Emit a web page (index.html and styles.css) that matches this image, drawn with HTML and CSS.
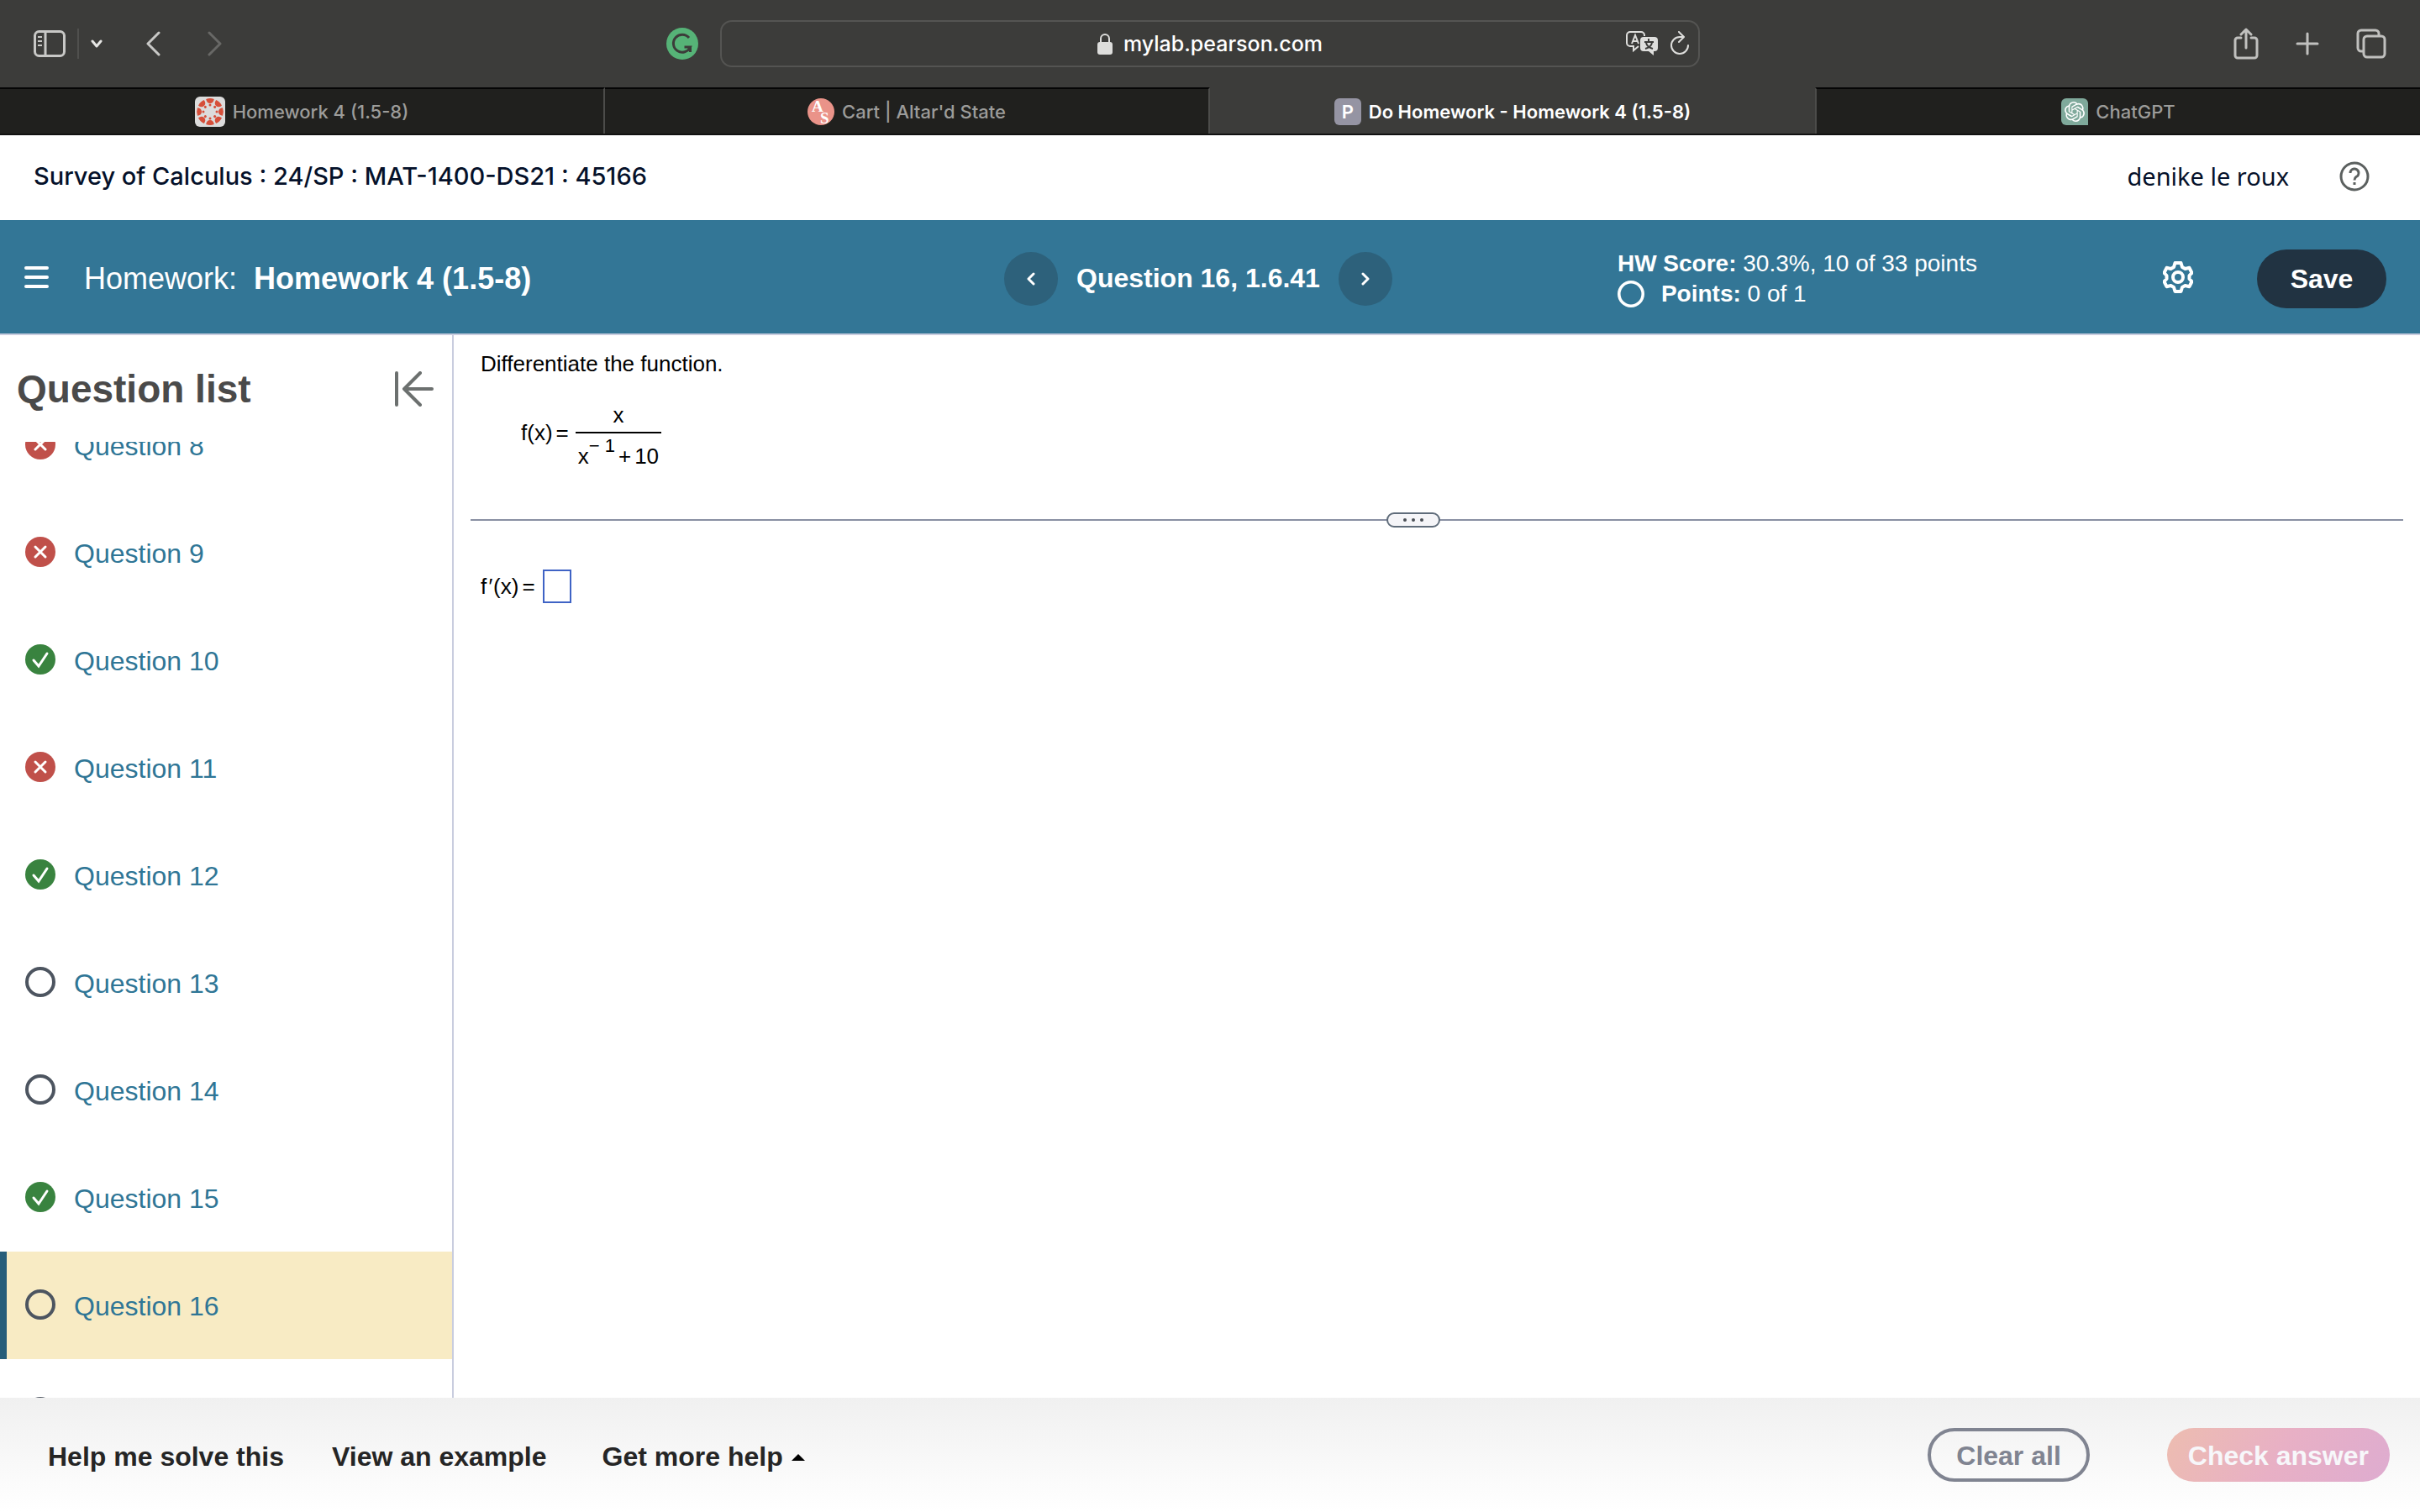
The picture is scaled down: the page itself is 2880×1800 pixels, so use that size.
FILE: index.html
```html
<!DOCTYPE html>
<html lang="en">
<head>
<meta charset="utf-8">
<title>Do Homework - Homework 4 (1.5-8)</title>
<link rel="stylesheet" href="styles.css">
</head>
<body>
<svg width="0" height="0" class="sprite" aria-hidden="true">
  <symbol id="wrong" viewBox="0 0 36 36"><circle cx="18" cy="18" r="18" fill="#c0504a"/><path d="M12 12l12 12M24 12L12 24" stroke="#fff" stroke-width="3" stroke-linecap="round"/></symbol>
  <symbol id="right" viewBox="0 0 36 36"><circle cx="18" cy="18" r="18" fill="#39833f"/><path d="M10 19l6 7L26 11" fill="none" stroke="#fff" stroke-width="3" stroke-linecap="round"/></symbol>
  <symbol id="open" viewBox="0 0 36 36"><circle cx="18" cy="18" r="16" fill="none" stroke="currentColor" stroke-width="4"/></symbol>
</svg>

<header class="toolbar">
  <div class="tools">
    <button class="icon" aria-label="Sidebar"><svg width="38" height="32" viewBox="0 0 38 32" fill="none" stroke="#c8c8c6" stroke-width="3"><rect x="1.500" y="1.500" width="35" height="29" rx="5"/><path d="M14 2v28"/><path d="M5 8h5M5 13h5M5 18h5" stroke-width="2"/></svg></button>
    <span class="divider"></span>
    <button class="icon" aria-label="Tab groups"><svg width="14" height="10" viewBox="0 0 14 10" fill="none" stroke="#e6e6e4" stroke-width="3" stroke-linecap="round" stroke-linejoin="round"><path d="M2 2l5 6 5-6"/></svg></button>
    <button class="icon back" aria-label="Back"><svg width="18" height="30" viewBox="0 0 18 30" fill="none" stroke="#c8c8c6" stroke-width="3" stroke-linecap="round" stroke-linejoin="round"><path d="M15 2L2 15l13 13"/></svg></button>
    <button class="icon" aria-label="Forward"><svg width="18" height="30" viewBox="0 0 18 30" fill="none" stroke="#686866" stroke-width="3" stroke-linecap="round" stroke-linejoin="round"><path d="M3 2l13 13L3 28"/></svg></button>
    <button class="icon grammarly" aria-label="Grammarly"><svg width="38" height="38" viewBox="0 0 38 38"><circle cx="19" cy="19" r="19" fill="#56b377"/><path d="M27 12a10.500 10.500 0 1 0 1.500 11h-7M28.500 22v7" fill="none" stroke="#3c3c3a" stroke-width="3"/></svg></button>
  </div>
  <div class="address">
    <span class="site"><svg width="18" height="26" viewBox="0 0 18 26"><rect y="11" width="18" height="15" rx="3" fill="#dededc"/><path d="M4 12V7a5 5 0 0 1 10 0v5" fill="none" stroke="#dededc" stroke-width="2"/></svg>mylab.pearson.com</span>
    <span class="actions">
      <button class="icon" aria-label="Translate"><svg width="40" height="30" viewBox="0 0 40 30"><path d="M15 18l-6 5v-5H5a4 4 0 0 1-4-4V5a4 4 0 0 1 4-4h13a4 4 0 0 1 4 4v1" fill="none" stroke="#dededc" stroke-width="2"/><path d="M7 15l4-10 4 10M8 12h6" fill="none" stroke="#dededc" stroke-width="2"/><path d="M21 7h13a4 4 0 0 1 4 4v9a4 4 0 0 1-4 4h-1v5l-6-5h-6a4 4 0 0 1-4-4v-9a4 4 0 0 1 4-4z" fill="#dededc"/><path d="M22 13h11M27 9v4M24 14c1 4 4 6 8 7M31 14c-1 4-4 6-8 7" fill="none" stroke="#3c3c3a" stroke-width="2"/></svg></button>
      <button class="icon" aria-label="Reload"><svg width="24" height="30" viewBox="0 0 24 30" fill="none" stroke="#dededc" stroke-width="2" stroke-linecap="round" stroke-linejoin="round"><path d="M22 17A10 10 0 1 1 12 7h4M11 1l6 6-6 6"/></svg></button>
    </span>
  </div>
  <div class="tools end">
    <button class="icon" aria-label="Share"><svg width="30" height="38" viewBox="0 0 30 38" fill="none" stroke="#c0c0be" stroke-width="3" stroke-linecap="round" stroke-linejoin="round"><path d="M9 12H5a3 3 0 0 0-3 3v18a3 3 0 0 0 3 3h20a3 3 0 0 0 3-3V15a3 3 0 0 0-3-3h-4M15 24V2M9 8l6-6 6 6"/></svg></button>
    <button class="icon" aria-label="New tab"><svg width="28" height="28" viewBox="0 0 28 28" stroke="#c0c0be" stroke-width="3" stroke-linecap="round"><path d="M14 2v24M2 14h24"/></svg></button>
    <button class="icon" aria-label="Tab overview"><svg width="36" height="36" viewBox="0 0 36 36" fill="none" stroke="#c0c0be" stroke-width="3"><path d="M9 27H6a4 4 0 0 1-4-4V6a4 4 0 0 1 4-4h17a4 4 0 0 1 4 4v3"/><rect x="9" y="9" width="25" height="25" rx="4"/></svg></button>
  </div>
</header>

<nav class="tabs">
  <a class="tab" href="#"><svg width="36" height="36" viewBox="0 0 36 36" fill="#d64f3a"><rect width="36" height="36" rx="6" fill="#dcdcdc"/><g id="ray"><path d="M13.200 3Q18 1.200 22.800 3Q22 8 18 8T13.200 3z"/><circle cx="18" cy="10" r="1.500"/></g><use href="#ray" transform="rotate(45 18 18)"/><use href="#ray" transform="rotate(90 18 18)"/><use href="#ray" transform="rotate(135 18 18)"/><use href="#ray" transform="rotate(180 18 18)"/><use href="#ray" transform="rotate(225 18 18)"/><use href="#ray" transform="rotate(270 18 18)"/><use href="#ray" transform="rotate(315 18 18)"/></svg>Homework 4 (1.5-8)</a>
  <a class="tab" href="#"><svg width="32" height="32" viewBox="0 0 32 32"><circle cx="16" cy="16" r="16" fill="#ea9389"/><text x="5" y="16" class="monogram">A</text><text x="15" y="30" class="monogram">S</text></svg>Cart | Altar'd State</a>
  <a class="tab current" href="#"><span class="favicon">P</span>Do Homework - Homework 4 (1.5-8)</a>
  <a class="tab" href="#"><svg width="32" height="32" viewBox="0 0 32 32"><path d="M6 0h20a6 6 0 0 1 6 6v26H6a6 6 0 0 1-6-6V6a6 6 0 0 1 6-6z" fill="#7fa99b"/><path transform="translate(4 4)" fill="#fff" d="M22.2819 9.8211a5.9847 5.9847 0 0 0-.5157-4.9108 6.0462 6.0462 0 0 0-6.5098-2.9A6.0651 6.0651 0 0 0 4.9807 4.1818a5.9847 5.9847 0 0 0-3.9977 2.9 6.0462 6.0462 0 0 0 .7427 7.0966 5.98 5.98 0 0 0 .511 4.9107 6.051 6.051 0 0 0 6.5146 2.9001A5.9847 5.9847 0 0 0 13.2599 24a6.0557 6.0557 0 0 0 5.7718-4.2058 5.9894 5.9894 0 0 0 3.9977-2.9001 6.0557 6.0557 0 0 0-.7475-7.0729zm-9.022 12.6081a4.4755 4.4755 0 0 1-2.8764-1.0408l.1419-.0804 4.7783-2.7582a.7948.7948 0 0 0 .3927-.6813v-6.7369l2.02 1.1686a.071.071 0 0 1 .038.052v5.5826a4.504 4.504 0 0 1-4.4945 4.4944zm-9.6607-4.1254a4.4708 4.4708 0 0 1-.5346-3.0137l.142.0852 4.783 2.7582a.7712.7712 0 0 0 .7806 0l5.8428-3.3685v2.3324a.0804.0804 0 0 1-.0332.0615L9.74 19.9502a4.4992 4.4992 0 0 1-6.1408-1.6464zM2.3408 7.8956a4.485 4.485 0 0 1 2.3655-1.9728V11.6a.7664.7664 0 0 0 .3879.6765l5.8144 3.3543-2.0201 1.1685a.0757.0757 0 0 1-.071 0l-4.8303-2.7865A4.504 4.504 0 0 1 2.3408 7.872zm16.5963 3.8558L13.1038 8.364 15.1192 7.2a.0757.0757 0 0 1 .071 0l4.8303 2.7913a4.4944 4.4944 0 0 1-.6765 8.1042v-5.6772a.79.79 0 0 0-.407-.667zm2.0107-3.0231l-.142-.0852-4.7735-2.7818a.7759.7759 0 0 0-.7854 0L9.409 9.2297V6.8974a.0662.0662 0 0 1 .0284-.0615l4.8303-2.7866a4.4992 4.4992 0 0 1 6.6802 4.66zM8.3065 12.863l-2.02-1.1638a.0804.0804 0 0 1-.038-.0567V6.0742a4.4992 4.4992 0 0 1 7.3757-3.4537l-.142.0805L8.704 5.459a.7948.7948 0 0 0-.3927.6813zm1.0976-2.3654l2.602-1.4998 2.6069 1.4998v2.9994l-2.5974 1.4997-2.6067-1.4997Z"/></svg>ChatGPT</a>
</nav>

<div class="course">
  <h1>Survey of Calculus : 24/SP : MAT-1400-DS21 : 45166</h1>
  <div class="account"><span>denike le roux</span>
    <button class="icon" aria-label="Help"><svg width="36" height="36" viewBox="0 0 36 36" fill="none" stroke="#5b605f" stroke-width="3"><circle cx="18" cy="18" r="16"/><path d="M13 14a5 5 0 1 1 7 4.500c-1.500 1-2 1.500-2 4"/><path d="M18 25v3"/></svg></button>
  </div>
</div>

<div class="bar">
  <div class="assignment">
    <button class="icon raised" aria-label="Menu"><svg width="30" height="28" viewBox="0 0 30 28" stroke="#fff" stroke-width="4" stroke-linecap="round"><path d="M3 3h25M3 14h25M3 25h25"/></svg></button>
    <span class="kind">Homework:</span><strong>Homework 4 (1.5-8)</strong>
  </div>
  <div class="pager">
    <button class="round" aria-label="Previous question"><svg width="10" height="16" viewBox="0 0 10 16" fill="none" stroke="#fff" stroke-width="3" stroke-linecap="round" stroke-linejoin="round"><path d="M8 2L2 8l6 6"/></svg></button>
    <strong>Question 16, 1.6.41</strong>
    <button class="round" aria-label="Next question"><svg width="10" height="16" viewBox="0 0 10 16" fill="none" stroke="#fff" stroke-width="3" stroke-linecap="round" stroke-linejoin="round"><path d="M2 2l6 6-6 6"/></svg></button>
  </div>
  <div class="status">
    <div class="score">
      <p><b>HW Score:</b> 30.3%, 10 of 33 points</p>
      <p class="points"><svg width="32" height="32"><use href="#open"/></svg><span><b>Points:</b> 0 of 1</span></p>
    </div>
    <div class="controls">
      <button class="icon raised" aria-label="Settings"><svg width="36" height="38" viewBox="0 0 36 38" fill="none" stroke="#fff" stroke-width="4" stroke-linejoin="round"><path d="M14.500 2h7l1.500 5 3.500 2 5-1.200 3 6L31.500 17v4l3 3.200-3 6-5-1.200-3.500 2-1.500 5h-7L13 31l-3.500-2-5 1.200-3-6L4.500 21v-4l-3-3.200 3-6 5 1.200L13 7z"/><circle cx="18" cy="19" r="6"/></svg></button>
      <button class="save">Save</button>
    </div>
  </div>
</div>

<div class="work">
  <aside class="sidebar">
    <div class="side-head"><h2>Question list</h2>
      <button class="icon" aria-label="Collapse question list"><svg width="46" height="42" viewBox="0 0 46 42" fill="none" stroke="#6c706f" stroke-width="4" stroke-linecap="round" stroke-linejoin="round"><path d="M2 2v38M44 21H11M30 2L11 21l19 19"/></svg></button>
    </div>
    <div class="list">
      <ul>
        <li><svg width="36" height="36"><use href="#wrong"/></svg><a href="#">Question 8</a></li>
        <li><svg width="36" height="36"><use href="#wrong"/></svg><a href="#">Question 9</a></li>
        <li><svg width="36" height="36"><use href="#right"/></svg><a href="#">Question 10</a></li>
        <li><svg width="36" height="36"><use href="#wrong"/></svg><a href="#">Question 11</a></li>
        <li><svg width="36" height="36"><use href="#right"/></svg><a href="#">Question 12</a></li>
        <li><svg width="36" height="36"><use href="#open"/></svg><a href="#">Question 13</a></li>
        <li><svg width="36" height="36"><use href="#open"/></svg><a href="#">Question 14</a></li>
        <li><svg width="36" height="36"><use href="#right"/></svg><a href="#">Question 15</a></li>
        <li class="active"><svg width="36" height="36"><use href="#open"/></svg><a href="#">Question 16</a></li>
        <li><svg width="36" height="36"><use href="#open"/></svg><a href="#">Question 17</a></li>
      </ul>
    </div>
  </aside>
  <main class="question">
    <p>Differentiate the function.</p>
    <div class="formula"><span>f(x)<span class="op">=</span></span><span class="fraction"><span class="over">x</span><span class="under">x<sup>− 1</sup><span class="op">+</span><span class="op">10</span></span></span></div>
    <div class="split"><button class="grip" aria-label="Resize panels"><svg width="26" height="6" viewBox="0 0 26 6" fill="#4a4f55"><circle cx="3" cy="3" r="2"/><circle cx="13" cy="3" r="2"/><circle cx="23" cy="3" r="2"/></svg></button></div>
    <div class="answer"><label for="answer">f<i class="prime">′</i>(x)<span class="op">=</span></label><input id="answer" type="text"></div>
  </main>
</div>

<footer class="footer">
  <div class="help">
    <button>Help me solve this</button>
    <button>View an example</button>
    <button class="more">Get more help<svg width="16" height="8" viewBox="0 0 16 8"><path d="M0 8l8-8 8 8z"/></svg></button>
  </div>
  <div class="submit">
    <button class="clear">Clear all</button>
    <button class="check">Check answer</button>
  </div>
</footer>
</body>
</html>
```
FILE: styles.css
```css
* { box-sizing: border-box; }
body {
  margin: 0;
  min-height: 100vh;
  display: flex;
  flex-direction: column;
  background: #fff;
  font-family: "Liberation Sans", Arial, sans-serif;
  font-size: 32px;
  color: #000;
}
h1, h2, p, ul { margin: 0; padding: 0; }
button { font: inherit; color: inherit; background: none; border: 0; padding: 0; }
svg { display: block; flex: none; }
a { text-decoration: none; color: inherit; }
.sprite { position: absolute; }
.icon { display: flex; align-items: center; flex: none; }

/* browser chrome */
.toolbar {
  display: grid;
  grid-template-columns: 1fr minmax(0, 1166px) 1fr;
  align-items: center;
  height: 104px;
  padding: 0 40px;
  background: #3c3c3a;
  color: #fff;
  font-family: Inter, sans-serif;
}
.tools { display: flex; align-items: center; }
.divider { width: 2px; height: 36px; margin: 0 14px; background: #50504e; }
.back { margin: 0 54px 0 52px; }
.grammarly { margin-left: auto; margin-right: 26px; }
.end { justify-content: flex-end; gap: 44px; }
.address {
  display: grid;
  grid-template-columns: 1fr auto 1fr;
  align-items: center;
  height: 56px;
  padding: 0 10px;
  border: 2px solid #545452;
  border-radius: 14px;
  font-size: 25px;
  font-weight: 500;
}
.site { grid-column: 2; display: flex; align-items: center; gap: 13px; }
.actions { justify-self: end; display: flex; gap: 12px; }
.tabs {
  display: grid;
  grid-template-columns: repeat(4, 1fr);
  height: 57px;
  background: #3c3c3a;
  border-bottom: 2px solid #111;
  font-family: Inter, sans-serif;
  font-size: 22px;
  font-weight: 500;
  color: #9c9c9a;
}
.tab {
  display: flex;
  align-items: center;
  justify-content: center;
  gap: 9px;
  background: #20201e;
  border-top: 2px solid #050505;
  border-right: 2px solid #4c4c4a;
}
.tab:last-child { border-right: 0; border-left: 2px solid #4c4c4a; }
.current { background: #3c3c3a; border-top-color: #3c3c3a; border-right: 0; color: #fff; font-weight: 600; }
.favicon {
  width: 32px;
  line-height: 32px;
  border-radius: 6px;
  background: #9594a3;
  text-align: center;
}
.monogram { font: bold 19px "Liberation Serif", serif; fill: #fff; }

/* course header */
.course {
  display: flex;
  align-items: center;
  justify-content: space-between;
  height: 101px;
  padding: 0 60px 4px 40px;
  color: #05112a;
}
.course h1 { font: 500 29px Inter, sans-serif; }
.account { display: flex; align-items: center; gap: 60px; font-family: "Noto Sans", sans-serif; font-size: 29px; }

/* assignment bar */
.bar {
  display: grid;
  grid-template-columns: 1195px auto 1fr;
  align-items: center;
  height: 137px;
  padding-top: 4px;
  background: #337696;
  border-bottom: 2px solid #c9cddf;
  color: #fff;
}
.raised { padding-bottom: 4px; }
.assignment { display: flex; align-items: center; padding-left: 28px; font-size: 36px; }
.kind { margin: 0 20px 0 42px; }
.pager { display: flex; align-items: center; gap: 22px; }
.round {
  display: flex;
  align-items: center;
  justify-content: center;
  width: 64px;
  height: 64px;
  border-radius: 50%;
  background: #2d617b;
}
.status { display: flex; align-items: center; justify-content: space-between; padding: 0 40px 0 268px; }
.score { font-size: 28px; line-height: 36px; }
.points { display: flex; align-items: center; gap: 20px; }
.controls { display: flex; align-items: center; gap: 76px; }
.save {
  width: 154px;
  height: 70px;
  padding-top: 2px;
  border-radius: 35px;
  background: #213342;
  font-weight: bold;
}

/* working area */
.work { flex: 1; display: grid; grid-template-columns: 540px 1fr; min-height: 0; }
.sidebar { display: flex; flex-direction: column; border-right: 2px solid #c9cddf; }
.side-head {
  display: flex;
  align-items: center;
  justify-content: space-between;
  height: 127px;
  padding: 0 22px 0 20px;
}
.side-head h2 { font-size: 46px; line-height: 52px; color: #4a4a4a; }
.list { flex: 1 1 0; min-height: 0; overflow: hidden; }
.list ul { list-style: none; margin-top: -60px; }
.list li {
  display: flex;
  align-items: center;
  gap: 22px;
  height: 128px;
  padding: 0 0 2px 30px;
  color: #4d5560;
}
.list a { padding-top: 4px; color: #2f7696; }
.list .active { background: #f8ebc4; border-left: 8px solid #265d7a; padding-left: 22px; }
.question { padding: 18px 20px 0; font-size: 26px; line-height: 32px; }
.question > p { padding-left: 12px; }
.op { margin-left: 4px; }
.formula { display: flex; align-items: center; gap: 8px; padding: 20px 0 0 60px; }
.fraction { display: flex; flex-direction: column; align-items: center; line-height: 36px; }
.over { padding: 7px 0 2px; }
.under { border-top: 2px solid #000; padding: 9px 3px 0; }
.under sup { font-size: 22px; line-height: 0; vertical-align: 14px; }
.split {
  display: flex;
  align-items: center;
  justify-content: center;
  height: 18px;
  margin-top: 49px;
  padding-right: 56px;
  background: linear-gradient(#8990a3, #8990a3) center / 100% 2px no-repeat;
}
.grip {
  display: flex;
  align-items: center;
  justify-content: center;
  width: 64px;
  height: 18px;
  border: 2px solid #5f6c7a;
  border-radius: 9px;
  background: #f5f5f8;
}
.answer { display: flex; align-items: center; gap: 9px; padding: 50px 0 0 12px; }
.prime { margin: 0 2px 0 1px; }
.answer input { width: 34px; height: 40px; border: 2px solid #3f63c5; padding: 2px; font: inherit; }

/* footer */
.footer {
  display: flex;
  align-items: center;
  justify-content: space-between;
  height: 136px;
  padding: 0 36px 0 57px;
  background: linear-gradient(#f0f0f0, #fff);
  font-weight: bold;
  color: #252525;
}
.help { display: flex; gap: 57px; padding-top: 5px; }
.help button { display: flex; align-items: center; gap: 10px; }
.help .more { margin-left: 9px; }
.submit { display: flex; gap: 92px; }
.clear, .check { height: 64px; border-radius: 32px; }
.clear { padding: 2px 30px 0; border: 4px solid #808491; color: #808491; }
.check { padding: 2px 25px 0; color: #f7f7fa; background: linear-gradient(120deg, #edbdb0, #e8b0c5 50%, #deacd0); }
```
